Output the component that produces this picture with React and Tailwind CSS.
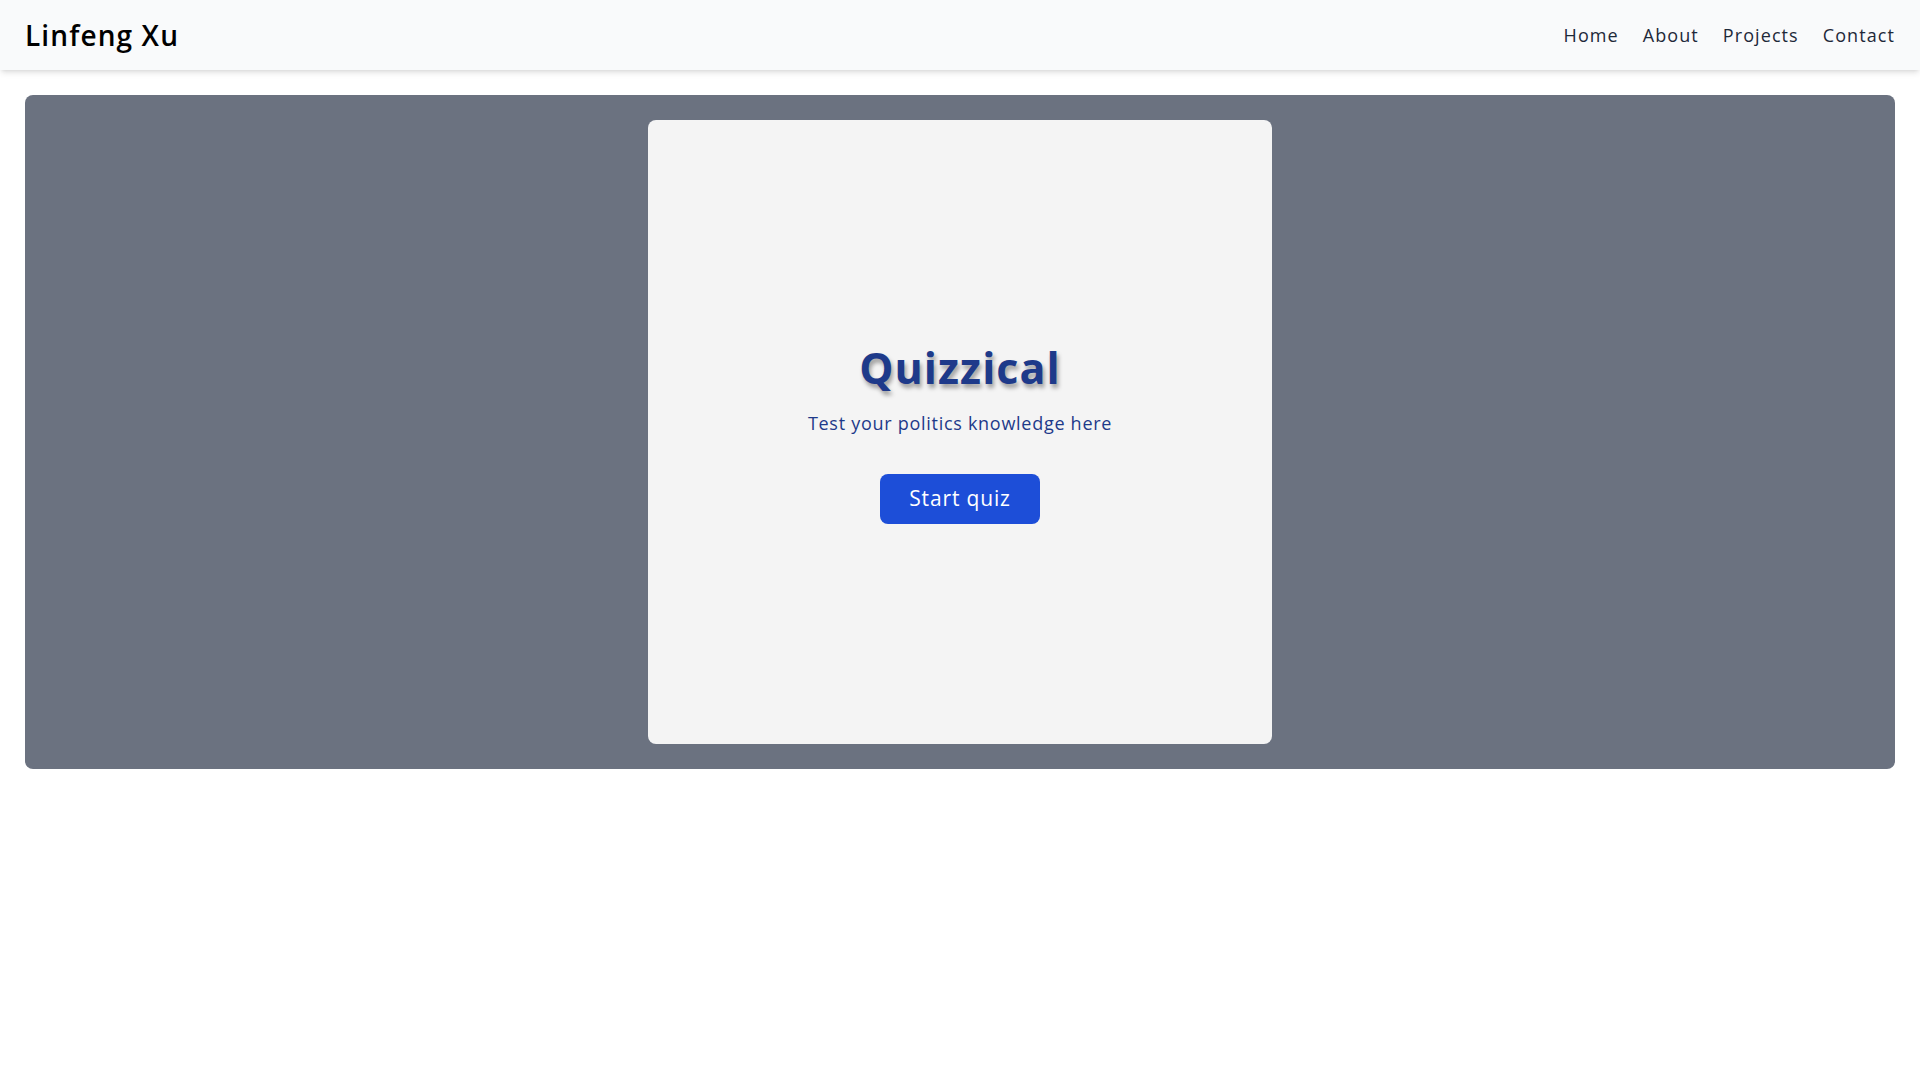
import React from 'react'

function App() {
  return (
    <div className="min-h-screen bg-white font-['Open_Sans',sans-serif]">
      {/* Navbar */}
      <nav className="h-[70px] bg-[#f9fafb] shadow-md flex items-center justify-between px-[25px]">
        <h1 className="text-[28px] font-semibold tracking-[0.04em] text-black">Linfeng Xu</h1>
        <ul className="flex gap-[24px] text-[18px] tracking-[0.06em] text-gray-800">
          <li>Home</li>
          <li>About</li>
          <li>Projects</li>
          <li>Contact</li>
        </ul>
      </nav>

      {/* Main */}
      <main className="mx-[25px] mt-[25px] bg-[#6b7280] rounded-lg p-[25px] flex justify-center">
        <div className="w-[624px] h-[624px] pt-[6px] bg-[#f4f4f4] rounded-lg flex flex-col items-center justify-center">
          <h2 className="text-[43px] leading-none font-bold text-[#1e3a8a] tracking-wide [text-shadow:2px_4px_4px_rgba(0,0,0,0.35)]">
            Quizzical
          </h2>
          <p className="mt-[21px] text-[18px] tracking-[0.04em] text-[#1e3a8a]">Test your politics knowledge here</p>
          <button className="mt-[37px] w-[160px] h-[50px] bg-[#1d4ed8] text-white text-[21px] tracking-[0.04em] rounded-lg">
            Start quiz
          </button>
        </div>
      </main>
    </div>
  )
}

export default App
